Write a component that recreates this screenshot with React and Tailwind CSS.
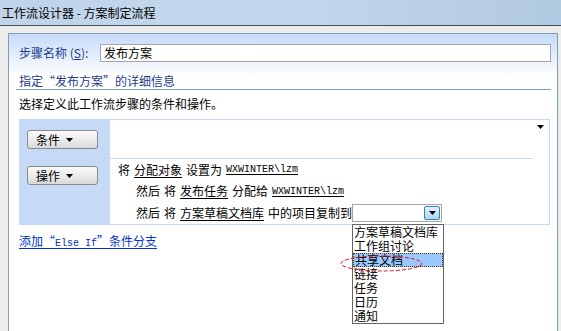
import React from 'react';

const cjk = '"Noto Sans CJK SC", "Noto Sans", sans-serif';
const mono = '"Liberation Mono", "Noto Sans CJK SC", monospace';

function Mono({ children, underline }) {
  return (
    <span className={`text-[10px] ${underline ? 'underline underline-offset-2' : ''}`} style={{ fontFamily: mono }}>
      {children}
    </span>
  );
}

function MenuButton({ label }) {
  return (
    <div className="flex h-[19px] w-[71px] items-center gap-[6px] rounded-[3px] border border-[#8a8a8a] bg-gradient-to-b from-[#fbfbfb] via-[#ececec] to-[#d9d9d9] pl-[8px] text-[12px] text-black">
      <span>{label}</span>
      <svg width="7" height="4" viewBox="0 0 7 4"><path d="M0 0h7L3.5 4z" fill="#000" /></svg>
    </div>
  );
}

export default function App() {
  const options = ['方案草稿文档库', '工作组讨论', '共享文档', '链接', '任务', '日历', '通知'];

  return (
    <div className="h-[331px] w-[561px] overflow-hidden bg-[#ececec]" style={{ fontFamily: cjk }}>
      {/* Title bar */}
      <div className="flex h-[26px] items-center border-b border-[#3d4e5f] bg-gradient-to-r from-[#bfd4e9] via-[#c3d8ec] to-[#b1c9e0] pl-[2px] text-[12px] text-black">
        工作流设计器 - 方案制定流程
      </div>

      <div className="pl-[8px] pr-[3px] pt-[7px]">
        <div className="h-[300px] border-x border-t border-[#7f9db9] bg-gradient-to-b from-[#c6dafa] via-white via-[14%] to-white pl-[10px] pr-[6px] pt-[10px]">
          {/* Step name */}
          <div className="flex h-[18px] items-center">
            <span className="w-[81px] text-[12px] text-[#1e3c8c]">
              步骤名称 (<span className="underline underline-offset-1">S</span>):
            </span>
            <div className="flex h-[18px] flex-1 items-center border border-[#a5a5a5] bg-white pl-[3px] text-[12px] text-black">
              发布方案
            </div>
          </div>

          {/* Heading */}
          <div className="mt-[11px] ml-[-3px] border-b border-[#7f9db9] pl-[3px] text-[12px] leading-[16px] text-[#1e3c8c]">
            指定“发布方案”的详细信息
          </div>

          <div className="mt-[6px] text-[12px] leading-[16px] text-black">选择定义此工作流步骤的条件和操作。</div>

          {/* Rules table */}
          <div className="mt-[7px] flex h-[106px] w-[531px] border border-[#c6d9f7]">
            <div className="flex w-[90px] flex-col gap-[17px] bg-[#c6d9f7] pl-[7px] pt-[10px]">
              <MenuButton label="条件" />
              <MenuButton label="操作" />
            </div>
            <div className="flex flex-1 flex-col bg-white">
              <div className="mr-[16px] flex h-[39px] justify-end border-b border-[#c6d9f7]">
                <svg className="mr-[-11px] mt-[5px]" width="7" height="4" viewBox="0 0 7 4"><path d="M0 0h7L3.5 4z" fill="#000" /></svg>
              </div>
              <div className="flex h-[21px] items-center gap-[4px] pl-[8px] text-[12px] text-black">
                <span>将</span>
                <span className="underline underline-offset-2">分配对象</span>
                <span>设置为</span>
                <Mono underline>WXWINTER\lzm</Mono>
              </div>
              <div className="flex h-[22px] items-center gap-[4px] pl-[26px] text-[12px] text-black">
                <span>然后</span>
                <span>将</span>
                <span className="underline underline-offset-2">发布任务</span>
                <span>分配给</span>
                <Mono underline>WXWINTER\lzm</Mono>
              </div>
              <div className="flex h-[22px] items-center gap-[4px] pl-[26px] text-[12px] text-black">
                <span>然后</span>
                <span>将</span>
                <span className="underline underline-offset-2">方案草稿文档库</span>
                <span>中的项目复制到</span>
                <div className="relative ml-[-4px]">
                  <div className="flex h-[18px] w-[90px] items-center justify-end border border-[#a5a5a5] bg-white pr-[1px]">
                    <div className="flex h-[14px] w-[16px] items-center justify-center rounded-[2px] border border-[#3c7fb1] bg-gradient-to-b from-[#e3f1fb] to-[#a9d6f5]">
                      <svg width="7" height="4" viewBox="0 0 7 4"><path d="M0 0h7L3.5 4z" fill="#000" /></svg>
                    </div>
                  </div>
                  {/* Open dropdown list */}
                  <div className="absolute left-0 top-[20px] z-10 w-[92px] border border-[#646464] bg-white">
                    {options.map((o) => (
                      <div
                        key={o}
                        className={`flex h-[14px] items-center pl-[1px] text-[12px] leading-[14px] text-black ${o === '共享文档' ? 'border border-dotted border-[#5a3a00] bg-[#99c9ff]' : ''}`}
                      >
                        {o}
                      </div>
                    ))}
                    <svg className="pointer-events-none absolute left-[-13px] top-[30px]" width="83" height="17" viewBox="0 0 83 17">
                      <ellipse cx="41.5" cy="8.5" rx="40.5" ry="7.5" fill="none" stroke="#e8101a" strokeWidth="1" strokeDasharray="4 2" />
                    </svg>
                  </div>
                </div>
              </div>
            </div>
          </div>

          {/* Else If link */}
          <div className="mt-[8px] text-[12px] leading-[16px] text-[#0033cc] underline underline-offset-2">
            添加“<span className="text-[10px]" style={{ fontFamily: mono }}>Else If</span>”条件分支
          </div>
        </div>
      </div>
    </div>
  );
}
